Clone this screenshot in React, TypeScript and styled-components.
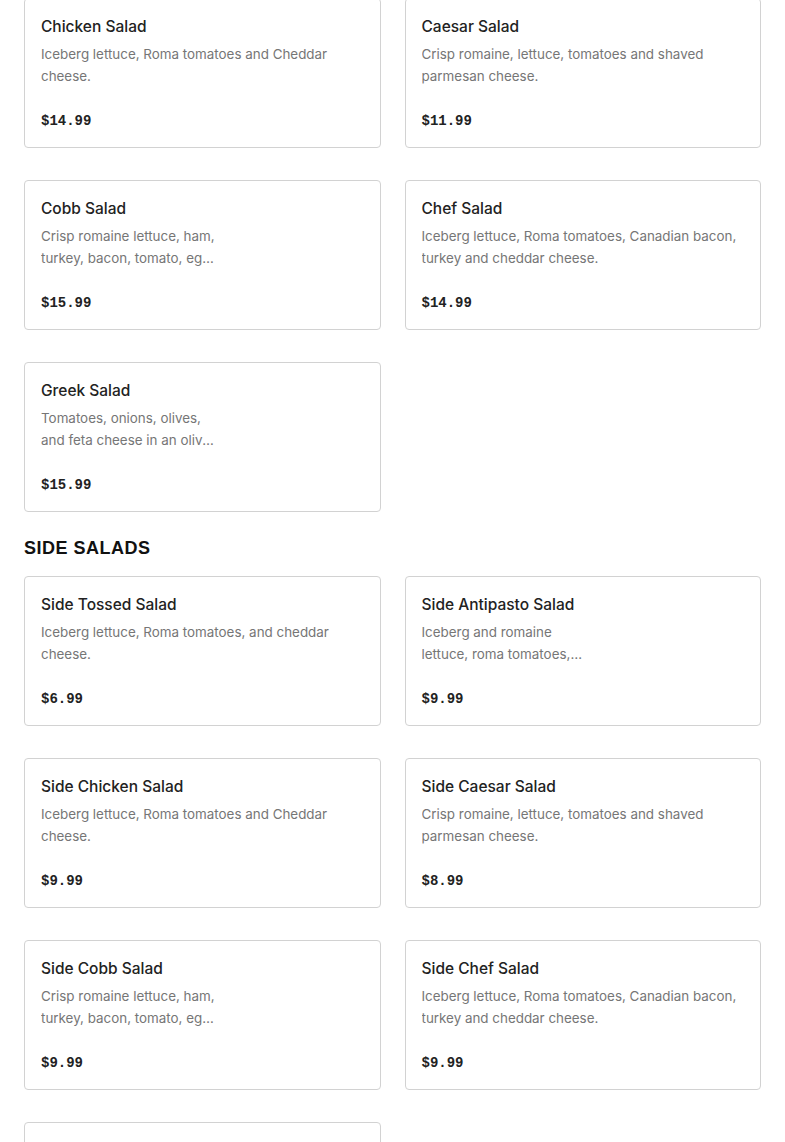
import * as React from 'react';
import styled, { createGlobalStyle } from 'styled-components';

interface MenuItem {
  name: string;
  description: string;
  price: string;
  short?: boolean;
}

interface MenuSection {
  title?: string;
  items: MenuItem[];
}

const sections: MenuSection[] = [
  {
    items: [
      { name: 'Chicken Salad', description: 'Iceberg lettuce, Roma tomatoes and Cheddar cheese.', price: '$14.99' },
      { name: 'Caesar Salad', description: 'Crisp romaine, lettuce, tomatoes and shaved parmesan cheese.', price: '$11.99' },
      {
        name: 'Cobb Salad',
        description: 'Crisp romaine lettuce, ham, turkey, bacon, tomato, egg and cheddar cheese.',
        price: '$15.99',
        short: true,
      },
      { name: 'Chef Salad', description: 'Iceberg lettuce, Roma tomatoes, Canadian bacon, turkey and cheddar cheese.', price: '$14.99' },
      {
        name: 'Greek Salad',
        description: 'Tomatoes, onions, olives, and feta cheese in an olive oil dressing.',
        price: '$15.99',
        short: true,
      },
    ],
  },
  {
    title: 'SIDE SALADS',
    items: [
      { name: 'Side Tossed Salad', description: 'Iceberg lettuce, Roma tomatoes, and cheddar cheese.', price: '$6.99' },
      {
        name: 'Side Antipasto Salad',
        description: 'Iceberg and romaine lettuce, roma tomatoes, ham, salami and provolone.',
        price: '$9.99',
        short: true,
      },
      { name: 'Side Chicken Salad', description: 'Iceberg lettuce, Roma tomatoes and Cheddar cheese.', price: '$9.99' },
      { name: 'Side Caesar Salad', description: 'Crisp romaine, lettuce, tomatoes and shaved parmesan cheese.', price: '$8.99' },
      {
        name: 'Side Cobb Salad',
        description: 'Crisp romaine lettuce, ham, turkey, bacon, tomato, egg and cheddar cheese.',
        price: '$9.99',
        short: true,
      },
      { name: 'Side Chef Salad', description: 'Iceberg lettuce, Roma tomatoes, Canadian bacon, turkey and cheddar cheese.', price: '$9.99' },
      {
        name: 'Side Greek Salad',
        description: 'Tomatoes, onions, olives, and feta cheese in an olive oil dressing.',
        price: '$9.99',
        short: true,
      },
    ],
  },
];

const GlobalStyle = createGlobalStyle`
  body {
    margin: 0;
    background: #fff;
    font-family: Inter, "Noto Sans", sans-serif;
    color: #222;
  }
`;

const Page = styled.main`
  margin-top: -2px;
  padding: 0 24px;
`;

const SectionHeading = styled.h2`
  margin: 24px 0 16px;
  font-family: "Liberation Sans", Arial, sans-serif;
  font-size: 18px;
  line-height: 24px;
  font-weight: 900;
  letter-spacing: 0.5px;
  color: #111;
`;

const Grid = styled.div`
  display: grid;
  grid-template-columns: 1fr 1fr;
  column-gap: 24px;
  row-gap: 32px;
`;

const Card = styled.div`
  border: 1px solid #d2d2d2;
  border-radius: 4px;
  padding: 16px 16px 16px;
  background: #fff;
  box-sizing: border-box;
  height: 150px;
  display: flex;
  flex-direction: column;
`;

const Title = styled.h3`
  margin: 0;
  font-size: 15.5px;
  line-height: 24px;
  font-weight: 500;
  color: #222;
`;

const Description = styled.p<{ $short?: boolean }>`
  margin: 4px 0 0;
  font-size: 13.4px;
  line-height: 22px;
  color: #767676;
  height: 44px;
  max-width: ${(p) => (p.$short ? '180px' : 'none')};
  display: -webkit-box;
  -webkit-line-clamp: 2;
  -webkit-box-orient: vertical;
  overflow: hidden;
`;

const Price = styled.div`
  margin-top: 24px;
  font-family: "Liberation Mono", "DejaVu Sans Mono", monospace;
  font-size: 14px;
  line-height: 20px;
  font-weight: 700;
  color: #222;
`;

const ItemCard: React.FC<{ item: MenuItem }> = ({ item }) => (
  <Card>
    <Title>{item.name}</Title>
    <Description $short={item.short}>{item.description}</Description>
    <Price>{item.price}</Price>
  </Card>
);

export default function App() {
  return (
    <>
      <GlobalStyle />
      <Page>
        {sections.map((section, i) => (
          <section key={i}>
            {section.title && <SectionHeading>{section.title}</SectionHeading>}
            <Grid>
              {section.items.map((item) => (
                <ItemCard key={item.name} item={item} />
              ))}
            </Grid>
          </section>
        ))}
      </Page>
    </>
  );
}
